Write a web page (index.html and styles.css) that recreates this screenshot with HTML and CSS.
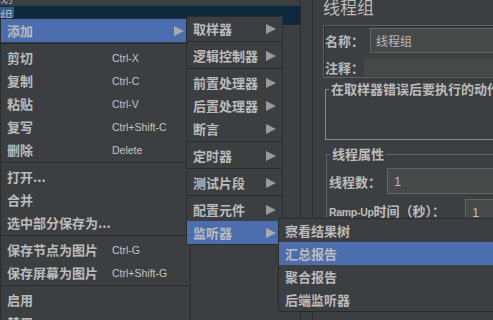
FILE: index.html
```html
<!DOCTYPE html>
<html>
<head>
    <meta charset="utf-8">
    <title>线程组</title>
    <link rel="stylesheet" href="styles.css">
</head>
<body>
    <div class="window">
        <div class="tree">
            <div class="tree-row tree-cut"><span class="tree-label">测试计划</span></div>
            <div class="tree-row selected"><span class="tree-label current">线程组</span></div>
        </div>
        <div class="splitter"></div>
        <div class="editor">
            <div class="editor-title">线程组</div>
            <div class="name-box">
                <div class="name-row">
                    <span class="field-label">名称：</span>
                    <div class="text-field name-field">线程组</div>
                </div>
                <div class="comment-row">
                    <span class="field-label">注释：</span>
                    <div class="comment-field"></div>
                </div>
            </div>
            <fieldset class="group action-group">
                <legend>在取样器错误后要执行的动作</legend>
                <div class="group-body"></div>
            </fieldset>
            <fieldset class="group thread-group">
                <legend>线程属性</legend>
                <div class="prop-row">
                    <span class="field-label">线程数：</span>
                    <div class="text-field threads-field">1</div>
                </div>
                <div class="prop-row ramp-row">
                    <span class="field-label ramp-label"><span class="latin">Ramp-Up</span>时间（秒）：</span>
                    <div class="text-field">1</div>
                </div>
            </fieldset>
        </div>
    </div>

    <!-- right-click menu -->
    <div class="menu main-menu">
        <div class="menu-item active">
            <span class="menu-label">添加</span>
            <svg class="arrow" viewBox="0 0 10 10"><polygon points="0,0 10,5 0,10"/></svg>
        </div>
        <div class="sep"></div>
        <div class="menu-item"><span class="menu-label">剪切</span><span class="shortcut">Ctrl-X</span></div>
        <div class="menu-item"><span class="menu-label">复制</span><span class="shortcut">Ctrl-C</span></div>
        <div class="menu-item"><span class="menu-label">粘贴</span><span class="shortcut">Ctrl-V</span></div>
        <div class="menu-item"><span class="menu-label">复写</span><span class="shortcut">Ctrl+Shift-C</span></div>
        <div class="menu-item"><span class="menu-label">删除</span><span class="shortcut">Delete</span></div>
        <div class="sep"></div>
        <div class="menu-item"><span class="menu-label">打开...</span></div>
        <div class="menu-item"><span class="menu-label">合并</span></div>
        <div class="menu-item"><span class="menu-label wide">选中部分保存为...</span></div>
        <div class="sep"></div>
        <div class="menu-item"><span class="menu-label">保存节点为图片</span><span class="shortcut">Ctrl-G</span></div>
        <div class="menu-item"><span class="menu-label">保存屏幕为图片</span><span class="shortcut">Ctrl+Shift-G</span></div>
        <div class="sep"></div>
        <div class="menu-item"><span class="menu-label">启用</span></div>
        <div class="menu-item"><span class="menu-label">禁用</span></div>
    </div>

    <div class="menu add-menu">
        <div class="menu-item"><span class="menu-label">取样器</span><svg class="arrow" viewBox="0 0 10 10"><polygon points="0,0 10,5 0,10"/></svg></div>
        <div class="sep"></div>
        <div class="menu-item"><span class="menu-label">逻辑控制器</span><svg class="arrow" viewBox="0 0 10 10"><polygon points="0,0 10,5 0,10"/></svg></div>
        <div class="sep"></div>
        <div class="menu-item"><span class="menu-label">前置处理器</span><svg class="arrow" viewBox="0 0 10 10"><polygon points="0,0 10,5 0,10"/></svg></div>
        <div class="menu-item"><span class="menu-label">后置处理器</span><svg class="arrow" viewBox="0 0 10 10"><polygon points="0,0 10,5 0,10"/></svg></div>
        <div class="menu-item"><span class="menu-label">断言</span><svg class="arrow" viewBox="0 0 10 10"><polygon points="0,0 10,5 0,10"/></svg></div>
        <div class="sep"></div>
        <div class="menu-item"><span class="menu-label">定时器</span><svg class="arrow" viewBox="0 0 10 10"><polygon points="0,0 10,5 0,10"/></svg></div>
        <div class="sep"></div>
        <div class="menu-item"><span class="menu-label">测试片段</span><svg class="arrow" viewBox="0 0 10 10"><polygon points="0,0 10,5 0,10"/></svg></div>
        <div class="sep"></div>
        <div class="menu-item"><span class="menu-label">配置元件</span><svg class="arrow" viewBox="0 0 10 10"><polygon points="0,0 10,5 0,10"/></svg></div>
        <div class="menu-item active"><span class="menu-label">监听器</span><svg class="arrow" viewBox="0 0 10 10"><polygon points="0,0 10,5 0,10"/></svg></div>
    </div>

    <div class="menu listener-menu">
        <div class="menu-item"><span class="menu-label">察看结果树</span></div>
        <div class="menu-item active"><span class="menu-label">汇总报告</span></div>
        <div class="menu-item"><span class="menu-label">聚合报告</span></div>
        <div class="menu-item"><span class="menu-label">后端监听器</span></div>
    </div>
</body>
</html>
```

FILE: styles.css
```css
* {
    box-sizing: border-box;
}

body {
    margin: 0;
    width: 493px;
    height: 320px;
    overflow: hidden;
    position: relative;
    background-color: #3c3f41;
    color: #bbbbbb;
    font-family: "Liberation Sans", "Noto Sans CJK SC", sans-serif;
    font-size: 13px;
}

.window {
    display: flex;
    height: 320px;
}

/* tree on the left */
.tree {
    width: 301px;
    flex-shrink: 0;
    border-right: 1px solid #2b2b2b;
    overflow: hidden;
}

.tree-row {
    height: 19px;
    display: flex;
    align-items: center;
    white-space: nowrap;
}

.tree-cut {
    margin-top: -13px;
}

.tree-cut .tree-label {
    margin-left: -39px;
    color: #a9a9a9;
}

.tree-row.selected {
    background-color: #0d293e;
}

.tree-label.current {
    margin-left: -26px;
    padding-right: 1px;
    line-height: 17px;
    background-color: #3a5a8a;
    color: #a9b7c6;
}

.splitter {
    width: 11px;
    flex-shrink: 0;
}

/* editor on the right */
.editor {
    width: 420px;
    flex-shrink: 0;
    border-left: 1px solid #2b2b2b;
    padding-left: 10px;
}

.editor-title {
    height: 18px;
    line-height: 18px;
    font-size: 17px;
}

.name-box {
    margin-top: 7px;
    border: 1px solid #5e6162;
    box-shadow: inset 1px 1px 0 #2b2b2b;
    padding: 2px 0 1px 1px;
}

.name-row,
.comment-row,
.prop-row {
    display: flex;
    align-items: center;
}

.name-row {
    height: 25px;
}

.comment-row {
    height: 18px;
    margin-top: 5px;
}

.field-label {
    font-weight: bold;
    white-space: nowrap;
}

.text-field {
    flex: 1;
    height: 100%;
    display: flex;
    align-items: center;
    padding-left: 6px;
    background-color: #45494a;
    border: 1px solid #646464;
}

.name-field {
    margin-left: 6px;
    padding-left: 5px;
    font-size: 12px;
}

.comment-field {
    flex: 1;
    height: 100%;
    background-color: #45494a;
}

.group {
    margin: 0;
    padding: 0 0 0 2px;
}

.group legend {
    padding: 0 2px;
    margin-left: 1px;
    line-height: 17px;
    font-weight: bold;
}

.action-group {
    margin: 3px 0 0 2px;
    border: 1px solid #8a8a8a;
}

.group-body {
    height: 41px;
}

.thread-group {
    margin: 6px 0 0 3px;
    border: 1px solid #636567;
    padding-top: 5px;
}

.prop-row {
    height: 26px;
}

.prop-row + .prop-row {
    margin-top: 5px;
}

.threads-field {
    margin-left: 6px;
}

.ramp-label {
    width: 136px;
    margin-top: -3px;
}

.latin {
    font-size: 10.5px;
    letter-spacing: -0.3px;
}

/* popup menus */
.menu {
    position: absolute;
    background-color: #3c3f41;
    border: 1px solid #2b2b2b;
    font-family: "Noto Sans CJK SC", sans-serif;
    font-weight: bold;
    font-size: 13px;
    color: #bbbbbb;
}

.main-menu {
    left: 0;
    top: 18px;
    width: 191px;
}

.add-menu {
    left: 186px;
    top: 16px;
    width: 97px;
}

.listener-menu {
    left: 278px;
    top: 218px;
    width: 240px;
}

.menu-item {
    display: flex;
    align-items: center;
    height: 23px;
    padding: 0 6px;
    white-space: nowrap;
}

.menu-item.active {
    background-color: #4b6eaf;
}

.main-menu .menu-label {
    flex: 0 0 105px;
}

.main-menu .menu-label.wide {
    flex: none;
}

.shortcut {
    font-family: "Liberation Sans", sans-serif;
    font-weight: normal;
    font-size: 10.5px;
    color: #c4c4c4;
}

.arrow {
    margin-left: auto;
    width: 10px;
    height: 10px;
    fill: #999999;
}

.menu-item.active .arrow {
    fill: #aaaaaa;
}

.sep {
    height: 1px;
    margin: 1px 0 2px;
    background-color: #2b2b2b;
}
```
